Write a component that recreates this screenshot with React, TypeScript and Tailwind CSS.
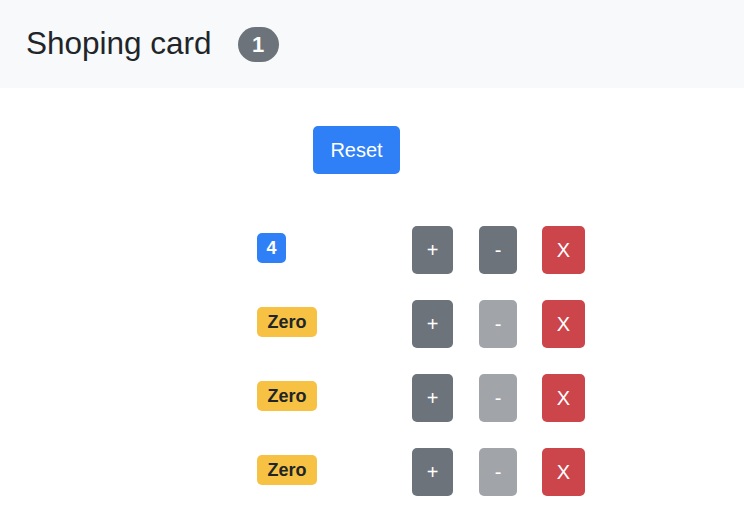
import React, { useState } from 'react';

const font = { fontFamily: '"Liberation Sans", Arial, sans-serif' };

const Counter = ({
  value,
  onInc,
  onDec,
  onDelete,
}: {
  value: number;
  onInc: () => void;
  onDec: () => void;
  onDelete: () => void;
}) => {
  const zero = value === 0;
  return (
    <div className="flex items-start h-[74px]">
      <span
        className={`mt-[7px] h-[30px] flex items-center justify-center rounded-[5px] text-[18px] font-bold ${
          zero ? 'w-[60px] bg-[#f7c244] text-[#212529]' : 'w-[29px] bg-[#2f80f6] text-white'
        }`}
      >
        {zero ? 'Zero' : value}
      </span>
      <div className={`flex items-center ${zero ? 'ml-[95px]' : 'ml-[126px]'}`}>
        <button
          onClick={onInc}
          className="w-[41px] h-[48px] rounded-[5px] bg-[#6c737b] text-white text-[20px]"
        >
          +
        </button>
        <button
          onClick={onDec}
          disabled={zero}
          className={`ml-[26px] w-[38px] h-[48px] rounded-[5px] text-white text-[20px] ${
            zero ? 'bg-[#a1a5aa]' : 'bg-[#6c737b]'
          }`}
        >
          -
        </button>
        <button
          onClick={onDelete}
          className="ml-[25px] w-[43px] h-[48px] rounded-[5px] bg-[#cc454b] text-white text-[20px]"
        >
          X
        </button>
      </div>
    </div>
  );
};

const App = () => {
  const [counters, setCounters] = useState([4, 0, 0, 0]);

  const update = (i: number, d: number) =>
    setCounters(counters.map((c, j) => (j === i ? Math.max(0, c + d) : c)));

  const total = counters.filter((c) => c > 0).length;

  return (
    <div className="min-h-screen bg-white text-[#212529]" style={font}>
      <header className="h-[88px] bg-[#f8f9fa] flex items-center px-[26px]">
        <span className="text-[31.5px] leading-none">Shoping card</span>
        <span className="ml-[26px] w-[41px] h-[35px] rounded-full bg-[#6c737b] text-white text-[22px] font-bold flex items-center justify-center">
          {total}
        </span>
      </header>

      <main className="pl-[257px]">
        <div className="pt-[38px] pl-[56px]">
          <button
            onClick={() => setCounters(counters.map(() => 0))}
            className="w-[87px] h-[48px] rounded-[5px] bg-[#2f80f6] text-white text-[20px]"
          >
            Reset
          </button>
        </div>
        <div className="mt-[52px]">
          {counters.map((c, i) => (
            <Counter
              key={i}
              value={c}
              onInc={() => update(i, 1)}
              onDec={() => update(i, -1)}
              onDelete={() => setCounters(counters.filter((_, j) => j !== i))}
            />
          ))}
        </div>
      </main>
    </div>
  );
};

export default App;
